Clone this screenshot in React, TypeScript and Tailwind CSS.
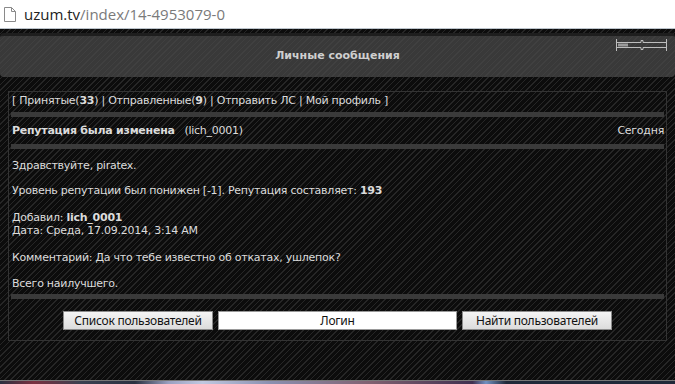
import React from 'react';

const stripes =
  'bg-[repeating-linear-gradient(135deg,#0c0c0c_0px,#0c0c0c_3px,#262626_3px,#262626_4px)]';

const PageIcon = () => (
  <svg width="12" height="15" viewBox="0 0 12 15" className="shrink-0">
    <path d="M0.5 0.5 H7.5 L11.5 4.5 V14.5 H0.5 Z" fill="#fff" stroke="#8a8a8a" />
    <path d="M7.5 0.5 V4.5 H11.5" fill="none" stroke="#8a8a8a" />
  </svg>
);

const SliderIcon = () => (
  <svg width="54" height="14" viewBox="0 0 54 14">
    <g fill="none" stroke="#bdbdbd" strokeWidth="1">
      <path d="M1.5 1 V13 M1.5 4.5 H26 V2.5 H28 V4.5 H51.5 M51.5 1 V13 M1.5 9.5 H26 V11.5 H28 V9.5 H51.5" />
    </g>
    <rect x="3" y="5.5" width="10" height="3" fill="#9a9a9a" />
  </svg>
);

const Bar = () => <div className="h-[5px] bg-[#3a3a3a]" />;

const Btn = ({ children }: { children: React.ReactNode }) => (
  <button className="h-[19px] w-[150px] border border-[#8c8c8c] bg-gradient-to-b from-[#f4f4f4] to-[#dcdcdc] font-['Noto_Sans',sans-serif] text-[12px] leading-[17px] text-[#111]">
    {children}
  </button>
);

export default function App() {
  return (
    <div className="h-[384px] w-[675px] overflow-hidden bg-black font-['DejaVu_Sans',sans-serif]">
      <div className="flex h-[29px] items-center gap-[8px] border-b border-[#bcc4cc] bg-white pl-[4px]">
        <PageIcon />
        <span className="font-['Open_Sans',sans-serif] text-[15px] text-[#7a7a7a]">
          <span className="text-[#222]">uzum.tv</span>/index/14-4953079-0
        </span>
      </div>

      <div className={`h-[351px] ${stripes} pt-[4px]`}>
        <div className="relative flex h-[44px] items-center justify-center rounded-[4px] border-t-[3px] border-[#1e1e1e] bg-[repeating-linear-gradient(135deg,#393939_0px,#393939_3px,#404040_3px,#404040_4px)]">
          <span className="text-[11px] font-bold text-[#cfcfcf]">Личные сообщения</span>
          <div className="absolute right-[6px] top-[2px]">
            <SliderIcon />
          </div>
        </div>

        <div className="mx-[8px] mt-[14px] h-[250px] border border-[#333] px-[2px] pt-[1px] text-[11px] tracking-[-0.25px] text-[#dcdcdc]">
          <div className="h-[16px] leading-[16px] pl-[1px]">
            [ Принятые(<b>33</b>) | Отправленные(<b>9</b>) | Отправить ЛС | Мой профиль ]
          </div>
          <div className="mt-[3px]">
            <Bar />
          </div>
          <div className="flex h-[27px] items-center justify-between pl-[1px] pt-[1px]">
            <span>
              <b>Репутация была изменена</b>&nbsp;&nbsp;&nbsp;(lich_0001)
            </span>
            <span>Сегодня</span>
          </div>
          <Bar />
          <div className="pl-[1px] pt-[10px] leading-[13px]">
            <div>Здравствуйте, piratex.</div>
            <div className="h-[12px]" />
            <div>
              Уровень репутации был понижен [-1]. Репутация составляет: <b>193</b>
            </div>
            <div className="h-[14px]" />
            <div>
              Добавил: <b>lich_0001</b>
            </div>
            <div>Дата: Среда, 17.09.2014, 3:14 AM</div>
            <div className="h-[14px]" />
            <div>Комментарий: Да что тебе известно об откатах, ушлепок?</div>
            <div className="h-[13px]" />
            <div>Всего наилучшего.</div>
          </div>
          <div className="mt-[4px]">
            <Bar />
          </div>
          <div className="mt-[12px] flex items-center justify-center gap-[5px]">
            <Btn>Список пользователей</Btn>
            <div className="flex h-[19px] w-[239px] items-center justify-center border border-[#999] bg-white font-['Noto_Sans',sans-serif] text-[12px] text-[#111]">
              Логин
            </div>
            <Btn>Найти пользователей</Btn>
          </div>
        </div>
      </div>
      <div className="h-[4px] border-t border-[#777] bg-[linear-gradient(90deg,#2a3040_0%,#7a3040_5%,#3a4050_12%,#2a3040_20%,#9aa0c0_25%,#c0c8e0_30%,#8a90b0_40%,#806070_55%,#403050_70%,#7090c0_72%,#202838_75%,#202838_100%)]" />
    </div>
  );
}
